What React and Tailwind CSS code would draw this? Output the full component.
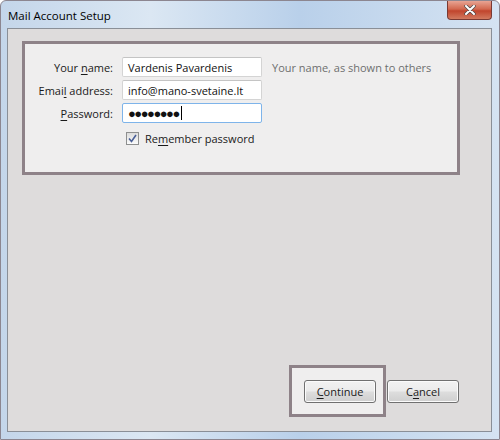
import React from 'react';

const font = { fontFamily: '"Open Sans", "Noto Sans", "Liberation Sans", sans-serif' };

function U({ children }) {
  return <span className="underline underline-offset-2">{children}</span>;
}

function Field({ label, children, hint }) {
  return (
    <div className="flex items-center h-[20px]">
      <div className="w-[88px] text-right text-[11px] text-[#1a1a1a] leading-none">{label}</div>
      <div className="ml-[9px]">{children}</div>
      {hint && <div className="ml-[10px] text-[11px] text-[#6e6e6e] leading-none">{hint}</div>}
    </div>
  );
}

function Input({ value, focus }) {
  return (
    <div
      className={
        'w-[140px] h-[20px] bg-white flex items-center px-[5px] text-[11px] text-[#111] leading-none border rounded-[2px] ' +
        (focus ? 'border-[#7eb4ea]' : 'border-[#d4d4d4] border-t-[#c4c4c4]')
      }
    >
      {value}
    </div>
  );
}

function WinButton({ children }) {
  return (
    <div className="w-[72px] h-[23px] rounded-[3px] border border-[#707070] bg-[linear-gradient(#f2f2f2_0%,#ebebeb_48%,#dddddd_52%,#cfcfcf_100%)] flex items-center justify-center text-[11px] text-[#1a1a1a] leading-none shadow-[inset_0_0_0_1px_#fbfbfb]">
      {children}
    </div>
  );
}

export default function App() {
  return (
    <div
      className="w-[500px] h-[440px] relative overflow-hidden bg-[linear-gradient(90deg,#c4d6ea_0%,#dbe7f3_30%,#b9d0ea_60%,#d5e3f2_100%)] border border-[#8c8690] rounded-t-[6px]"
      style={font}
    >
      {/* title bar */}
      <div className="h-[27px] flex items-center pl-[7px] pt-[2px] text-[11.5px] text-black leading-none">
        Mail Account Setup
      </div>

      {/* close button */}
      <div className="absolute top-0 right-[7px] w-[45px] h-[19px] rounded-b-[4px] border border-[#7a3a33] border-t-0 bg-[linear-gradient(#e8a493_0%,#d2684f_45%,#c1452d_55%,#d27a5f_100%)] flex items-center justify-center">
        <svg width="12" height="10" viewBox="0 0 12 10">
          <path d="M2 1 L10 9 M10 1 L2 9" stroke="#4a4a4a" strokeWidth="3.4" strokeLinecap="round" />
          <path d="M2 1 L10 9 M10 1 L2 9" stroke="#ffffff" strokeWidth="2" strokeLinecap="round" />
        </svg>
      </div>

      {/* client area */}
      <div className="ml-[6px] mr-[7px] h-[404px] border border-[#8a8f97] bg-[#dedcdc] flex flex-col">
        {/* highlighted form */}
        <div className="mt-[12px] ml-[14px] w-[438px] h-[134px] border-[3px] border-[#8e8288] bg-[#efeeee] pt-[13px] flex flex-col gap-[3px]">
          <Field label={<>Your <U>n</U>ame:</>} hint="Your name, as shown to others">
            <Input value="Vardenis Pavardenis" />
          </Field>
          <Field label={<>Emai<U>l</U> address:</>}>
            <Input value="info@mano-svetaine.lt" />
          </Field>
          <Field label={<><U>P</U>assword:</>}>
            <Input
              focus
              value={
                <span className="flex items-center">
                  <span className="tracking-[-1.5px] text-[13px]">●●●●●●●●</span>
                  <span className="w-px h-[14px] bg-black ml-[2px]" />
                </span>
              }
            />
          </Field>
          <div className="flex items-center mt-[6px] ml-[101px]">
            <div className="w-[13px] h-[13px] border border-[#8e8f8f] bg-[linear-gradient(#dcdcdc,#fbfbfb)] flex items-center justify-center">
              <svg width="9" height="9" viewBox="0 0 9 9">
                <path d="M1 4.5 L3.5 7.5 L8 1" fill="none" stroke="#4a5f97" strokeWidth="1.6" />
              </svg>
            </div>
            <span className="ml-[6px] text-[11px] text-[#1a1a1a] leading-none">
              Re<U>m</U>ember password
            </span>
          </div>
        </div>

        {/* buttons */}
        <div className="mt-auto mb-[14px] mr-[32px] flex items-start justify-end">
          <div className="border-[3px] border-[#8e8288] bg-[#efeeee] pl-[12px] pt-[12px] pr-[7px] pb-[11px]">
            <WinButton>
              <U>C</U>ontinue
            </WinButton>
          </div>
          <div className="ml-[1px] mt-[15px]">
            <WinButton>
              C<U>a</U>ncel
            </WinButton>
          </div>
        </div>
      </div>
    </div>
  );
}
